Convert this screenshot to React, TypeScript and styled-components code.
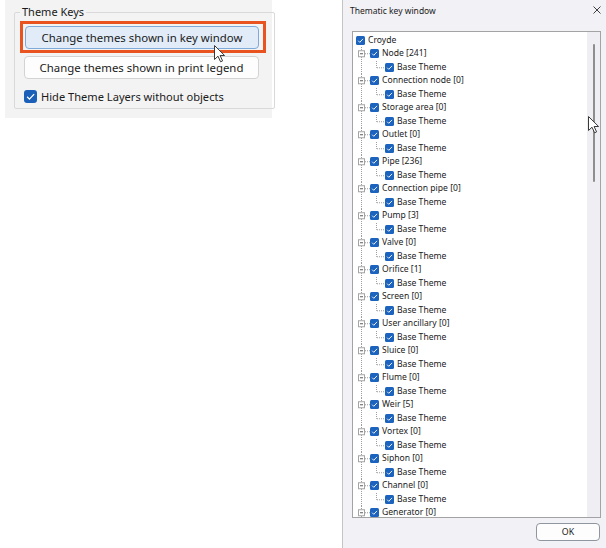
import React from "react";
import styled, { createGlobalStyle } from "styled-components";

const GlobalStyle = createGlobalStyle`
  html, body { margin: 0; padding: 0; background: #ffffff; }
  body { font-family: "Noto Sans", "Open Sans", sans-serif; color: #1a1a1a; }
  * { box-sizing: border-box; }
`;

const Page = styled.div`
  display: flex;
  align-items: flex-start;
  width: 606px;
  height: 548px;
  overflow: hidden;
`;

const Settings = styled.div`
  position: relative;
  margin-left: 5px;
  width: 267px;
  height: 118px;
  padding-top: 4px;
  background: #f3f3f3;
`;

const Group = styled.fieldset`
  margin: 0 0 0 9px;
  width: 254px;
  height: 105px;
  padding: 0 8px 0 9px;
  border: 1px solid #d9d9d9;
  border-radius: 2px;
  display: flex;
  flex-direction: column;
  align-items: flex-start;
`;

const Legend = styled.legend`
  margin-left: -4px;
  padding: 0 2px;
  font-size: 11px;
  line-height: 16px;
  color: #1a1a1a;
`;

const Highlight = styled.div`
  margin: 1px 0 0 -4px;
  width: 246px;
  height: 32px;
  border: 3px solid #e8531f;
  padding: 2px 4px 0 2px;
`;

const ActionButton = styled.button<{ $primary?: boolean }>`
  display: flex;
  align-items: center;
  justify-content: center;
  width: ${(p) => (p.$primary ? "234px" : "235px")};
  height: 23px;
  margin: ${(p) => (p.$primary ? "0" : "3px 0 0 0")};
  padding: 0;
  font-family: "Noto Sans", "Open Sans", sans-serif;
  font-size: 11.4px;
  color: #1a1a1a;
  background: ${(p) => (p.$primary ? "#e1ecf8" : "#fdfdfd")};
  border: 1px solid ${(p) => (p.$primary ? "#7ea9d9" : "#d3d3d3")};
  border-radius: 4px;
`;

const CheckRow = styled.label`
  display: flex;
  align-items: center;
  gap: 4px;
  margin-top: 11px;
  height: 13px;
  font-size: 11.1px;
  color: #1a1a1a;
`;

const BigBox = styled.span`
  display: inline-flex;
  align-items: center;
  justify-content: center;
  width: 13px;
  height: 13px;
  border-radius: 3px;
  background: #1a5fb8;
`;

const SmallBox = styled.span`
  display: inline-flex;
  align-items: center;
  justify-content: center;
  flex: none;
  width: 9px;
  height: 9px;
  border-radius: 1.5px;
  background: #1c63be;
`;

const CursorLayer = styled.div<{ $x: number; $y: number }>`
  position: absolute;
  left: ${(p) => p.$x}px;
  top: ${(p) => p.$y}px;
  width: 12px;
  height: 18px;
  pointer-events: none;
`;

const Dialog = styled.div`
  position: relative;
  margin-left: 70px;
  width: 264px;
  height: 548px;
  background: #f2f1f5;
  border-left: 1px solid #c4c4c4;
  display: flex;
  flex-direction: column;
`;

const TitleBar = styled.div`
  display: flex;
  align-items: center;
  justify-content: space-between;
  height: 20px;
  padding: 0 5px 0 7px;
`;

const Title = styled.span`
  font-size: 8.5px;
  color: #1a1a1a;
`;

const TreeBox = styled.div`
  display: flex;
  margin: 11px 5px 0 9px;
  height: 487px;
  border: 1px solid #a3a3a3;
  background: #ffffff;
`;

const TreeList = styled.div`
  flex: 1;
  overflow: hidden;
  padding: 1.5px 0 0 0;
`;

const Row = styled.div`
  display: flex;
  align-items: center;
  height: 13.5px;
  font-size: 8.6px;
  line-height: 13.5px;
  color: #1a1a1a;
  white-space: nowrap;
`;

const RootRow = styled(Row)`
  padding-left: 3px;
`;

const Label = styled.span`
  margin-left: 3px;
`;

const ScrollTrack = styled.div`
  width: 13px;
  background: #efeef2;
  padding: 12px 0 0 6px;
`;

const Thumb = styled.div`
  width: 2px;
  height: 138px;
  background: #8e8e8e;
  border-radius: 1px;
`;

const Footer = styled.div`
  display: flex;
  justify-content: flex-end;
  padding: 5px 6px 0 0;
`;

const OkButton = styled.button`
  width: 64px;
  height: 18px;
  padding: 0;
  font-family: "Noto Sans", "Open Sans", sans-serif;
  font-size: 8.8px;
  color: #1a1a1a;
  background: #fdfdfd;
  border: 1px solid #8f96a0;
  border-radius: 4px;
`;

const Check = ({ size }: { size: number }) => (
  <svg width={size} height={size} viewBox="0 0 10 10">
    <polyline points="2.4,5.2 4.2,7 7.8,3.2" fill="none" stroke="#ffffff" strokeWidth="1" />
  </svg>
);

const Cursor = () => (
  <svg width="12" height="18" viewBox="0 0 12 18">
    <path d="M0.5,0.5 L0.5,14.5 L4,11.2 L6.6,16.8 L8.6,15.9 L6.1,10.5 L10.6,10.5 Z" fill="#ffffff" stroke="#3a3a3a" strokeWidth="1" strokeLinejoin="round" />
  </svg>
);

const GUIDE = "#9d9d9d";

const CategoryGutter = () => (
  <svg width="17" height="13.5" viewBox="0 0 17 13.5">
    <line x1="8.5" y1="0" x2="8.5" y2="13.5" stroke={GUIDE} strokeWidth="1" strokeDasharray="1 1" />
    <rect x="5.5" y="3.75" width="6" height="6" fill="#ffffff" stroke="#a4a4a4" strokeWidth="1" />
    <line x1="7" y1="6.75" x2="10" y2="6.75" stroke="#5a5a5a" strokeWidth="1" />
    <line x1="12" y1="6.75" x2="17" y2="6.75" stroke={GUIDE} strokeWidth="1" strokeDasharray="1 1" />
  </svg>
);

const LeafGutter = () => (
  <svg width="32" height="13.5" viewBox="0 0 32 13.5">
    <line x1="8.5" y1="0" x2="8.5" y2="13.5" stroke={GUIDE} strokeWidth="1" strokeDasharray="1 1" />
    <line x1="23.5" y1="0" x2="23.5" y2="6.75" stroke={GUIDE} strokeWidth="1" strokeDasharray="1 1" />
    <line x1="24" y1="6.75" x2="32" y2="6.75" stroke={GUIDE} strokeWidth="1" strokeDasharray="1 1" />
  </svg>
);

const categories = [
  "Node [241]",
  "Connection node [0]",
  "Storage area [0]",
  "Outlet [0]",
  "Pipe [236]",
  "Connection pipe [0]",
  "Pump [3]",
  "Valve [0]",
  "Orifice [1]",
  "Screen [0]",
  "User ancillary [0]",
  "Sluice [0]",
  "Flume [0]",
  "Weir [5]",
  "Vortex [0]",
  "Siphon [0]",
  "Channel [0]",
  "Generator [0]",
];

export default function App() {
  return (
    <>
      <GlobalStyle />
      <Page>
        <Settings>
          <Group>
            <Legend>Theme Keys</Legend>
            <Highlight>
              <ActionButton $primary>Change themes shown in key window</ActionButton>
            </Highlight>
            <ActionButton>Change themes shown in print legend</ActionButton>
            <CheckRow>
              <BigBox>
                <Check size={13} />
              </BigBox>
              <span>Hide Theme Layers without objects</span>
            </CheckRow>
          </Group>
          <CursorLayer $x={209} $y={45}>
            <Cursor />
          </CursorLayer>
        </Settings>
        <Dialog>
          <TitleBar>
            <Title>Thematic key window</Title>
            <svg width="8" height="8" viewBox="0 0 8 8">
              <path d="M0.5,0.5 L7.5,7.5 M7.5,0.5 L0.5,7.5" stroke="#2a2a2a" strokeWidth="0.9" />
            </svg>
          </TitleBar>
          <TreeBox>
            <TreeList>
              <RootRow>
                <SmallBox>
                  <Check size={9} />
                </SmallBox>
                <Label>Croyde</Label>
              </RootRow>
              {categories.map((c, i) => (
                <React.Fragment key={c}>
                  <Row>
                    <CategoryGutter />
                    <SmallBox>
                      <Check size={9} />
                    </SmallBox>
                    <Label>{c}</Label>
                  </Row>
                  {i < categories.length - 1 && (
                    <Row>
                      <LeafGutter />
                      <SmallBox>
                        <Check size={9} />
                      </SmallBox>
                      <Label>Base Theme</Label>
                    </Row>
                  )}
                </React.Fragment>
              ))}
            </TreeList>
            <ScrollTrack>
              <Thumb />
            </ScrollTrack>
          </TreeBox>
          <Footer>
            <OkButton>OK</OkButton>
          </Footer>
          <CursorLayer $x={245} $y={116}>
            <Cursor />
          </CursorLayer>
        </Dialog>
      </Page>
    </>
  );
}
